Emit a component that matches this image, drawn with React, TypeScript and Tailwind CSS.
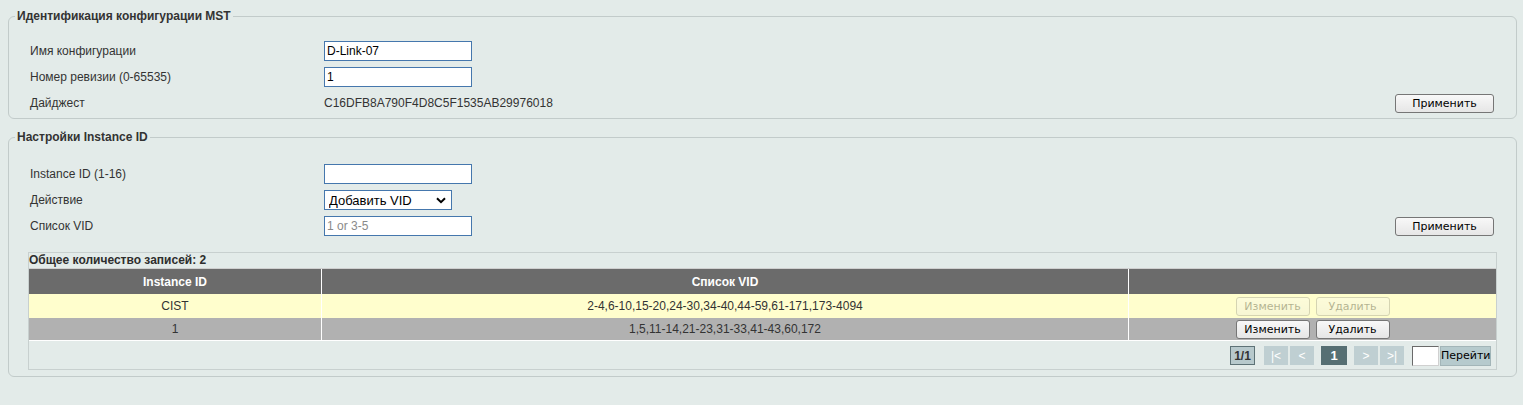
import React from "react"

const inputCls =
  "w-[148px] h-[20px] border border-[#4577ad] bg-white px-[2px] text-[12px] text-black outline-none font-['Liberation_Sans',Arial,sans-serif]"

const btnCls =
  "h-[19px] rounded-[3px] border border-[#767676] bg-gradient-to-b from-[#f8f8f8] to-[#e6e6e6] text-[11px] leading-[17px] text-black font-['DejaVu_Sans',Tahoma,sans-serif]"

function Row({ label, children }: { label: string; children: React.ReactNode }) {
  return (
    <div className="flex h-[26px] items-center pl-[2px] pr-[3px]">
      <div className="w-[294px] shrink-0">{label}</div>
      {children}
    </div>
  )
}

function ApplyButton() {
  return <button className={`${btnCls} ml-auto w-[99px]`}>Применить</button>
}

const rows = [
  { id: "CIST", vids: "2-4,6-10,15-20,24-30,34-40,44-59,61-171,173-4094", faded: true },
  { id: "1", vids: "1,5,11-14,21-23,31-33,41-43,60,172", faded: false },
]

export default function App() {
  return (
    <div className="min-h-screen bg-[#e3ebe9] pt-[8px] pl-[8px] pr-[6px] font-['Liberation_Sans',Arial,sans-serif] text-[12px] text-[#333]">
      {/* MST configuration */}
      <fieldset className="rounded-[6px] border border-[#c2cbca] pb-[2px]">
        <legend className="ml-[6px] px-[2px] font-bold leading-[16px]">Идентификация конфигурации MST</legend>
        <div className="pt-[14px] pl-[19px] pr-[19px]">
          <Row label="Имя конфигурации">
            <input className={inputCls} defaultValue="D-Link-07" />
          </Row>
          <Row label="Номер ревизии (0-65535)">
            <input className={inputCls} defaultValue="1" />
          </Row>
          <Row label="Дайджест">
            <span>C16DFB8A790F4D8C5F1535AB29976018</span>
            <ApplyButton />
          </Row>
        </div>
      </fieldset>

      {/* Instance ID settings */}
      <fieldset className="mt-[10px] rounded-[6px] border border-[#c2cbca] pb-[6px]">
        <legend className="ml-[6px] px-[2px] font-bold leading-[16px]">Настройки Instance ID</legend>
        <div className="pt-[16px] pl-[19px] pr-[19px]">
          <Row label="Instance ID (1-16)">
            <input className={inputCls} />
          </Row>
          <Row label="Действие">
            <div className="relative">
              <select className="h-[20px] w-[128px] appearance-none border border-[#4577ad] bg-white pl-[4px] text-[13px] text-black outline-none font-['Liberation_Sans',Arial,sans-serif]">
                <option>Добавить VID</option>
              </select>
              <svg className="pointer-events-none absolute right-[6px] top-[7px]" width="10" height="7" viewBox="0 0 10 7">
                <path d="M1 1.2 L5 5.2 L9 1.2" fill="none" stroke="#000" strokeWidth="2" />
              </svg>
            </div>
          </Row>
          <Row label="Список VID">
            <input className={`${inputCls} placeholder:text-[#8a8a8a]`} placeholder="1 or 3-5" />
            <ApplyButton />
          </Row>

          {/* Table */}
          <div className="mt-[13px] border border-[#c8d0cf]">
            <div className="h-[15px] font-bold leading-[15px] text-[#2e2e2e]">Общее количество записей: 2</div>
            <div className="grid grid-cols-[293px_807px_1fr] border-t border-[#cfcfcf] bg-[#6b6b6b] text-white font-bold">
              <div className="flex h-[25px] items-center justify-center border-r border-white">Instance ID</div>
              <div className="flex h-[25px] items-center justify-center border-r border-white">Список VID</div>
              <div className="h-[25px]" />
            </div>
            {rows.map((r) => (
              <div
                key={r.id}
                className={
                  r.faded
                    ? "grid h-[24px] grid-cols-[293px_807px_1fr] bg-[#fffecd] text-[#333]"
                    : "grid h-[23px] grid-cols-[293px_807px_1fr] border-b border-white bg-[#b1b1b1] text-[#333]"
                }
              >
                <div className="flex items-center justify-center border-r border-white">{r.id}</div>
                <div className="flex items-center justify-center border-r border-white">{r.vids}</div>
                <div className={`flex items-center justify-center gap-[6px] ${r.faded ? "opacity-30" : ""}`}>
                  <button className={`${btnCls} w-[74px]`}>Изменить</button>
                  <button className={`${btnCls} w-[74px]`}>Удалить</button>
                </div>
              </div>
            ))}
            <div className="flex h-[28px] items-start justify-end pt-[5px] pr-[5px]">
              <div className="flex h-[19px] w-[25px] items-center justify-center border border-[#5d7276] bg-[#b7c9cc] font-bold text-[#333]">
                1/1
              </div>
              <div className="ml-[9px] flex h-[19px] w-[24px] items-center justify-center bg-[#bfcfd2] text-white">|&lt;</div>
              <div className="ml-[2px] flex h-[19px] w-[24px] items-center justify-center bg-[#bfcfd2] text-white">&lt;</div>
              <div className="ml-[7px] flex h-[19px] w-[26px] items-center justify-center bg-[#566f73] text-[13px] font-bold text-white">1</div>
              <div className="ml-[7px] flex h-[19px] w-[24px] items-center justify-center bg-[#bfcfd2] text-white">&gt;</div>
              <div className="ml-[2px] flex h-[19px] w-[24px] items-center justify-center bg-[#bfcfd2] text-white">&gt;|</div>
              <input className="ml-[8px] h-[20px] w-[27px] border border-t-[#6a6a6a] border-l-[#6a6a6a] border-r-[#d0d0d0] border-b-[#d0d0d0] bg-white outline-none" />
              <button className="ml-[1px] h-[20px] w-[51px] border border-[#a3b5b8] bg-[#b6cacd] text-[11px] text-black font-['DejaVu_Sans',Tahoma,sans-serif]">
                Перейти
              </button>
            </div>
          </div>
        </div>
      </fieldset>
    </div>
  )
}
